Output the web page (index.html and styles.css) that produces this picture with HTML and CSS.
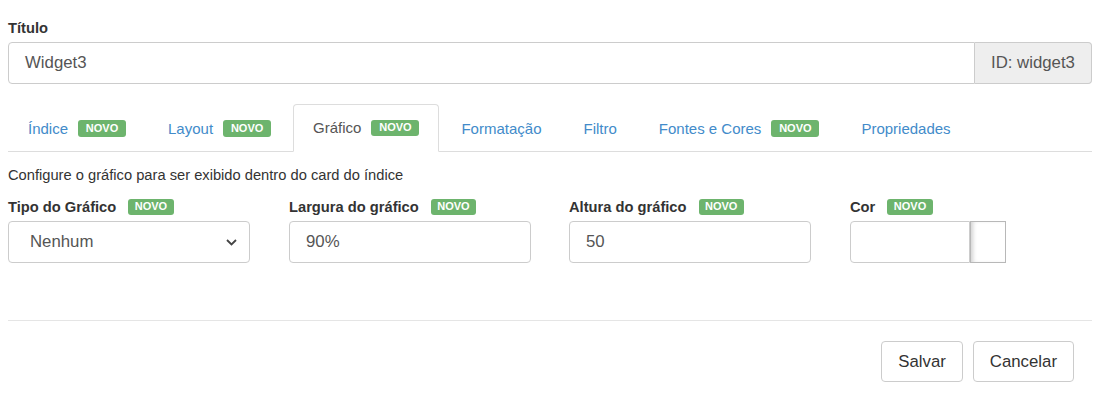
FILE: index.html
```html
<!DOCTYPE html>
<html lang="pt">
<head>
<meta charset="utf-8">
<title>Widget</title>
<link rel="stylesheet" href="styles.css">
</head>
<body>
<div class="page">
  <label class="lbl">Título</label>
  <div class="input-group">
    <div class="input grow">Widget3</div>
    <div class="addon">ID: widget3</div>
  </div>

  <ul class="tabs">
    <li><a class="tab">Índice <span class="badge tab-badge">NOVO</span></a></li>
    <li><a class="tab">Layout <span class="badge tab-badge">NOVO</span></a></li>
    <li><a class="tab active">Gráfico <span class="badge tab-badge">NOVO</span></a></li>
    <li><a class="tab">Formatação</a></li>
    <li><a class="tab">Filtro</a></li>
    <li><a class="tab">Fontes e Cores <span class="badge tab-badge">NOVO</span></a></li>
    <li><a class="tab">Propriedades</a></li>
  </ul>

  <p class="desc">Configure o gráfico para ser exibido dentro do card do índice</p>

  <div class="form-row">
    <div class="field">
      <label class="lbl">Tipo do Gráfico <span class="badge">NOVO</span></label>
      <div class="input select">
        <span>Nenhum</span>
        <svg width="11" height="7" viewBox="0 0 11 7"><path d="M1 1 L5.5 5.5 L10 1" fill="none" stroke="#444" stroke-width="1.8"/></svg>
      </div>
    </div>
    <div class="field">
      <label class="lbl">Largura do gráfico <span class="badge">NOVO</span></label>
      <div class="input">90%</div>
    </div>
    <div class="field">
      <label class="lbl">Altura do gráfico <span class="badge">NOVO</span></label>
      <div class="input">50</div>
    </div>
    <div class="field">
      <label class="lbl">Cor <span class="badge">NOVO</span></label>
      <div class="color-group">
        <div class="input color-input"></div>
        <span class="swatch"></span>
      </div>
    </div>
  </div>

  <hr class="sep">

  <div class="footer">
    <button class="btn">Salvar</button>
    <button class="btn">Cancelar</button>
  </div>
</div>
</body>
</html>
```

FILE: styles.css
```css
* { box-sizing: border-box; }
html, body { margin: 0; padding: 0; background: #fff; }
body {
  font-family: "Liberation Sans", Arial, sans-serif;
  font-size: 14.7px;
  line-height: 20px;
  color: #333;
}
.page { padding: 18px 8px 0; width: 1100px; }

.lbl {
  display: flex;
  align-items: center;
  font-weight: bold;
  margin-bottom: 4px;
  height: 20px;
  gap: 12px;
}

.input-group { display: flex; height: 42px; }
.input {
  height: 42px;
  border: 1px solid #ccc;
  border-radius: 4px;
  padding: 0 16px;
  font-size: 16.8px;
  color: #555;
  display: flex;
  align-items: center;
  background: #fff;
}
.grow { flex: 1; border-radius: 4px 0 0 4px; }
.addon {
  display: flex;
  align-items: center;
  padding: 0 15px 0 16px;
  font-size: 16.8px;
  color: #555;
  background: #eee;
  border: 1px solid #ccc;
  border-left: 0;
  border-radius: 0 4px 4px 0;
  width: 117px;
}

.tabs {
  list-style: none;
  margin: 20px 0 0;
  padding: 0;
  display: flex;
  border-bottom: 1px solid #ddd;
}
.tabs li { margin-right: 2px; margin-bottom: -1px; }
.tab {
  display: flex;
  align-items: center;
  gap: 10px;
  padding: 13px 19px;
  line-height: 20px;
  font-size: 15px;
  color: #428bca;
  border: 1px solid transparent;
  border-bottom: 0;
  border-radius: 4px 4px 0 0;
  height: 48px;
  cursor: pointer;
}
.tab.active {
  color: #555;
  background: #fff;
  border-color: #ddd;
  border-bottom: 1px solid #fff;
}

.badge {
  display: inline-block;
  background: #6db46d;
  color: #fff;
  font-weight: bold;
  font-size: 11px;
  line-height: 1;
  padding: 2.5px 6.5px 3px;
  border-radius: 3px;
}
.tab-badge { padding: 2.5px 7.8px 3px; }

.desc { margin: 13px 0 0; }

.form-row {
  display: grid;
  grid-template-columns: 281px 280px 281px auto;
  margin-top: 12px;
}
.field .input { width: 242px; }
.select {
  justify-content: space-between;
  padding: 0 12px 0 21px;
  color: #555;
}
.select svg { display: block; }

.color-group { display: flex; }
.field .color-input { width: 120px; border-radius: 4px 0 0 4px; }
.swatch {
  width: 36px;
  height: 42px;
  border: 1px solid #b8b8b8;
  background: #fff;
  box-shadow: inset 4px 0 4px -2px rgba(0,0,0,0.18);
}

.sep {
  margin: 57px 0 0;
  border: 0;
  border-top: 1px solid #e5e5e5;
  height: 0;
}

.footer {
  display: flex;
  justify-content: flex-end;
  gap: 10px;
  margin-top: 20px;
  padding-right: 18px;
}
.btn {
  font-family: inherit;
  font-size: 16.8px;
  color: #333;
  background: #fff;
  border: 1px solid #ccc;
  border-radius: 4px;
  height: 41px;
  padding: 0 16px;
}
```
